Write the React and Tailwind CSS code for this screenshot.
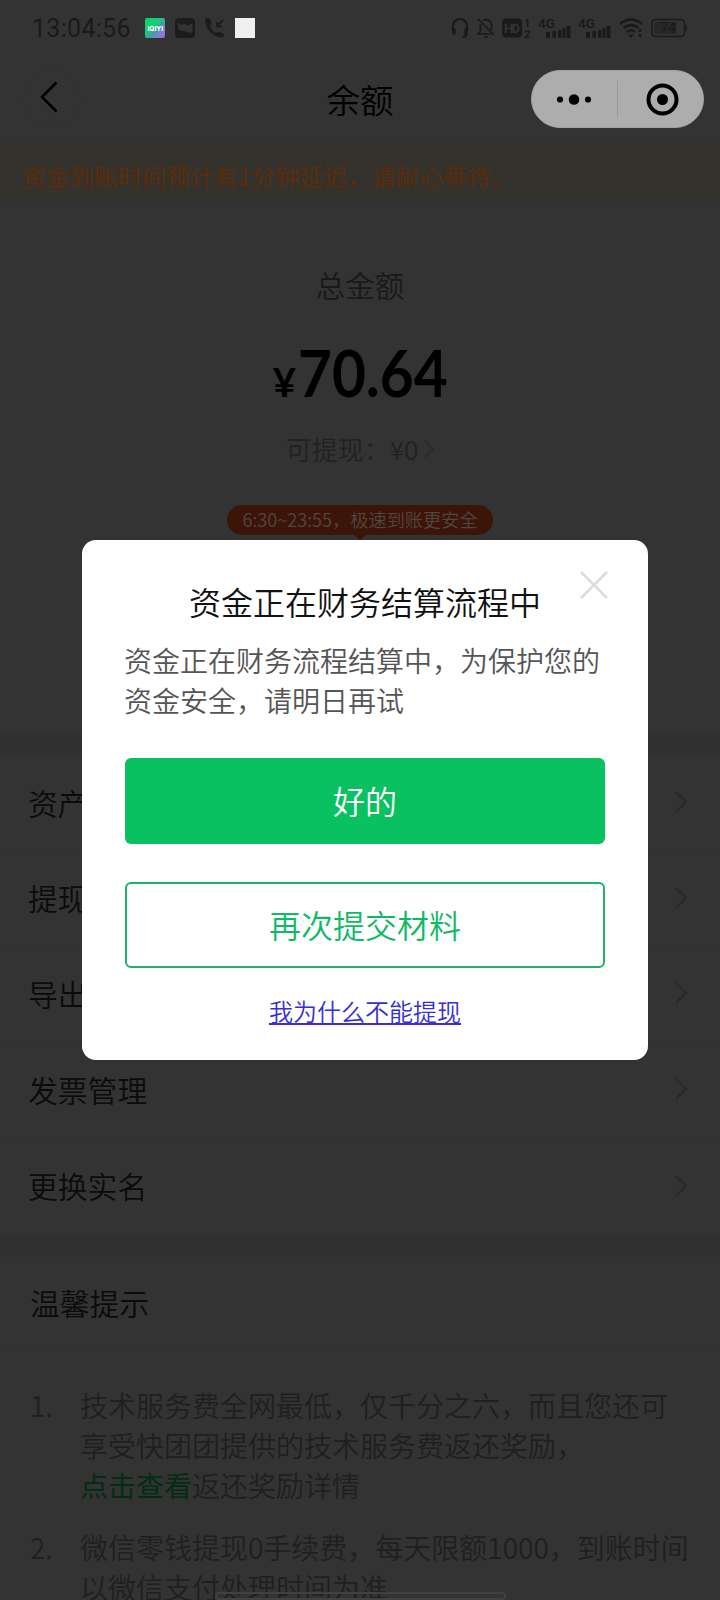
import React from "react";

const cjk = "font-['Noto_Sans_CJK_SC',sans-serif]";

function Chevron({ className }) {
  return (
    <svg className={className} viewBox="0 0 12 22" fill="none" stroke="currentColor" strokeWidth="1.8">
      <path d="M1 1L11 11L1 21" />
    </svg>
  );
}

function Signal() {
  return (
    <svg className="h-[22px] w-[33px] overflow-visible" viewBox="0 0 33 22" fill="currentColor">
      <text x="0" y="11" fontFamily="Roboto, sans-serif" fontSize="13.500" fontWeight="500">4G</text>
      <rect x="8" y="15" width="4" height="6" rx="1" />
      <rect x="14.5" y="14" width="3.5" height="7" rx="1" />
      <rect x="20" y="13" width="3.5" height="8" rx="1" />
      <rect x="24.500" y="11" width="3" height="10" rx="1" />
      <rect x="28.500" y="9" width="4" height="12" rx="1" />
    </svg>
  );
}

function StatusBar() {
  return (
    <div className="flex h-14 items-center pl-8 text-[#1a1a1a]">
      <div className="w-[113px] pt-0.5 font-[Roboto] text-[25px] leading-7 font-normal tracking-[0.3px] whitespace-nowrap">13:04:56</div>
      <div className="flex h-5 w-5 items-center justify-center rounded-[2px] bg-linear-135 from-[#10d070] from-35% via-[#3c9ca8] via-60% to-[#b04cf8]">
        <svg className="h-5 w-5" viewBox="0 0 20 20" fill="#fff">
          <text x="2.500" y="12.5" fontFamily="Inter, sans-serif" fontSize="6.5" fontWeight="800" textLength="15.500">IQIYI</text>
        </svg>
      </div>
      <svg className="ml-2.5 h-5 w-5" viewBox="0 0 20 20">
        <rect width="20" height="20" rx="4" fill="#1c1c1c" />
        <path d="M2.500 5C5 5 5 7 7.500 7C9 4 10 6 11.500 7.500C13 7 15 7 17.500 5V13C16 15 14 15.500 12.500 14C11 12.500 10 14 8 13C6 12.500 5 13.500 3.500 11Z" fill="#333" />
      </svg>
      <svg className="ml-2.5 h-5 w-5" viewBox="0 0 20 20" fill="#1c1c1c">
        <path d="M1 0L4.500 0L6.500 5.500L5 8C6 11 8 13 11 15L13 13.500L19.500 16L18 19.500C9 20 0 11 0 2Z" />
        <path d="M18 2L12 8M12 4V8.500H17" fill="none" stroke="#1c1c1c" strokeWidth="1.8" />
      </svg>
      <div className="ml-2.5 h-5 w-5 bg-[#f0f0f0]" />
      <div className="ml-[196px] flex items-center">
        <svg className="h-[22px] w-[18px]" viewBox="0 0 18 22" fill="none" stroke="currentColor" strokeWidth="2.200">
          <path d="M2 14V9A7 7 0 0 1 16 9V14M15.500 17Q15 20 11.500 20" />
          <path d="M3 11.500V17.500M15 11.500V17.500" strokeWidth="3.400" />
        </svg>
        <svg className="ml-2 h-[22px] w-[18px]" viewBox="0 0 18 22" fill="none" stroke="currentColor" strokeWidth="1.700">
          <path d="M1 2L17 18M6 3.500C10 1 14.500 4 14.500 8V13M3.500 7V14L1.500 17H14M7 20H11" />
        </svg>
        <svg className="ml-[7px] h-[22px] w-[29px] overflow-visible" viewBox="0 0 29 22" fill="currentColor">
          <rect x="0" y="1.500" width="20" height="19" rx="4" />
          <text x="2" y="16" fill="#333" fontFamily="Roboto, sans-serif" fontSize="13" fontWeight="700" textLength="16">HD</text>
          <text x="22" y="9.500" fontFamily="Roboto, sans-serif" fontSize="11" fontWeight="700">1</text>
          <text x="22" y="21" fontFamily="Roboto, sans-serif" fontSize="11" fontWeight="700">2</text>
        </svg>
        <div className="ml-[7px] flex"><Signal /></div>
        <div className="ml-[7px] flex"><Signal /></div>
        <svg className="ml-2 h-[22px] w-6" viewBox="0 0 24 22" fill="none" stroke="currentColor" strokeWidth="2.400">
          <path d="M1 7Q12 -2 23 7M4.500 11Q12 5 19.500 11M8 15Q12 11.500 16 15" />
          <path d="M9 17.500H15L12 21Z" fill="currentColor" stroke="none" />
          <path d="M21 12V15M21 17V20" />
        </svg>
        <svg className="ml-2 h-5 w-9" viewBox="0 0 36 20" fill="none">
          <rect x="1" y="1.500" width="32.500" height="17" rx="3.500" stroke="currentColor" strokeWidth="1.500" />
          <rect x="3.500" y="4" width="22" height="12" rx="1.500" fill="#272727" />
          <path d="M35 7.500V12.500" stroke="currentColor" strokeWidth="1.500" />
          <text x="9.500" y="15" fill="#191919" fontFamily="Roboto, sans-serif" fontSize="14" fontWeight="400">74</text>
        </svg>
      </div>
    </div>
  );
}

function NavBar() {
  return (
    <div className="grid h-[86px] grid-cols-[1fr_auto_1fr] items-center">
      <div className="flex pb-1 pl-[23px]">
        <div className="flex h-[58px] w-[58px] items-center rounded-full border border-[#313131] pl-4">
          <svg className="h-8 w-[18px]" viewBox="0 0 18 32" fill="none" stroke="#000" strokeWidth="2.600">
            <path d="M16.500 1.500L2 16L16.500 30.500" />
          </svg>
        </div>
      </div>
      <h1 className="text-[33.5px] leading-[48px] text-black">余额</h1>
      <div className="flex justify-end pr-4">
        <div className="flex h-[58px] w-[173px] items-center rounded-full border border-[#a2a2a2] bg-[#adadad]">
          <svg className="h-14 w-[171px]" viewBox="0 0 171 56">
            <circle cx="28" cy="28.500" r="3.100" />
            <circle cx="42" cy="28.500" r="5.300" />
            <circle cx="56" cy="28.500" r="3.100" />
            <path d="M85.500 10V46" stroke="#999" />
            <circle cx="130.500" cy="28.500" r="14" fill="none" stroke="#000" strokeWidth="4" />
            <circle cx="130.500" cy="28.500" r="5.500" />
          </svg>
        </div>
      </div>
    </div>
  );
}

function Balance() {
  return (
    <section className="flex h-[530px] flex-col items-center">
      <div className="mt-[61px] text-[29.6px] leading-[44px] text-[#191919]">总金额</div>
      <div className="mt-[27px] flex h-[76px] items-baseline font-[Lato] font-bold text-black">
        <span className="text-[40px] leading-[76px]">¥</span>
        <span className="mr-[-17px] ml-0.5 inline-block origin-left scale-x-90 text-[65px] leading-[76px]">70.64</span>
      </div>
      <div className="mt-5 flex items-center text-[26px] leading-[38px] text-[#212121]">
        <span>可提现：¥0</span>
        <Chevron className="ml-1.5 h-[18px] w-2.5 text-[#282828]" />
      </div>
      <div className="mt-[37px] flex flex-col items-center">
        <div className="h-[30px] w-[266px] rounded-full bg-[#3b1507] text-center text-[18.2px] leading-[29px] whitespace-nowrap text-[#524642]">
          6:30~23:55，极速到账更安全
        </div>
        <svg className="h-[5px] w-3" viewBox="0 0 12 5" fill="#3b1507"><path d="M0 0H12L6 5Z" /></svg>
      </div>
    </section>
  );
}

const rows = ["资产", "提现", "导出", "发票管理", "更换实名"];

function Menu() {
  return (
    <ul className="border-t-[24px] border-b-[22px] border-[#303030]">
      {rows.map((label, i) => (
        <li
          key={label}
          className={`flex h-[95.8px] items-center justify-between pr-[33px] pb-[3px] pl-[28px] text-[29.8px] text-[#0b0b0b] ${i < 4 ? "border-b border-[#303030]" : ""}`}
        >
          <span>{label}</span>
          <Chevron className="h-[22px] w-3 text-[#282828]" />
        </li>
      ))}
    </ul>
  );
}

function Tips() {
  return (
    <section>
      <h2 className="flex h-[91px] items-center border-b border-[#303030] pl-[30px] text-[29.8px] text-[#0b0b0b]">温馨提示</h2>
      <ol className="flex flex-col gap-[22px] pt-[37px] pl-[30px] text-[28px] leading-[40px] whitespace-nowrap text-[#1f1f1f]">
        <li className="flex">
          <span className="w-[50px]">1.</span>
          <p>
            技术服务费全网最低，仅千分之六，而且您还可<br />
            享受快团团提供的技术服务费返还奖励，<br />
            <span className="font-normal text-[#022c16]">点击查看</span>返还奖励详情
          </p>
        </li>
        <li className="flex">
          <span className="w-[50px]">2.</span>
          <p>
            微信零钱提现0手续费，每天限额1000，到账时间<br />
            以微信支付处理时间为准
          </p>
        </li>
      </ol>
    </section>
  );
}

function Dialog() {
  return (
    <div className="absolute top-[540px] left-[82px] flex h-[520px] w-[566px] flex-col items-center rounded-[14px] bg-white px-[43px]">
      <svg className="absolute top-[30px] right-[39px] h-[30px] w-[30px]" viewBox="0 0 30 30" fill="none" stroke="#dcdcdc" strokeWidth="2.500">
        <path d="M2 2L28 28M28 2L2 28" />
      </svg>
      <h2 className="mt-[38px] text-[32px] leading-[46px] text-[#111]">资金正在财务结算流程中</h2>
      <p className="mt-[16px] ml-[-1px] self-stretch text-[28px] leading-[40px] whitespace-nowrap text-[#555]">
        资金正在财务流程结算中，为保护您的<br />资金安全，请明日再试
      </p>
      <button className="mt-[38px] h-[86px] w-[480px] rounded-md bg-[#09c160] pb-0.5 text-[32px] text-white">好的</button>
      <button className="mt-[38px] h-[86px] w-[480px] rounded-md border-2 border-[#1fb069] pb-0.5 text-[32px] text-[#10b965]">再次提交材料</button>
      <a className="mt-[25px] text-[24px] leading-[36px] text-[#3730d0] underline decoration-2 underline-offset-[2px]">我为什么不能提现</a>
    </div>
  );
}

export default function App() {
  return (
    <div className={`relative h-[1600px] w-[720px] overflow-hidden bg-[#333] ${cjk} font-[350]`} lang="zh-CN">
      <StatusBar />
      <NavBar />
      <div className="h-[60px] bg-[#34322d] pl-[22px] text-[24px] leading-[67px] text-[#5f2b07]">
        资金到账时间预计有1分钟延迟，请耐心等待。
      </div>
      <Balance />
      <Menu />
      <Tips />
      <Dialog />
      <div className="absolute bottom-0 left-[215px] h-2 w-[291px] rounded-full border-2 border-[#414141]" />
    </div>
  );
}
